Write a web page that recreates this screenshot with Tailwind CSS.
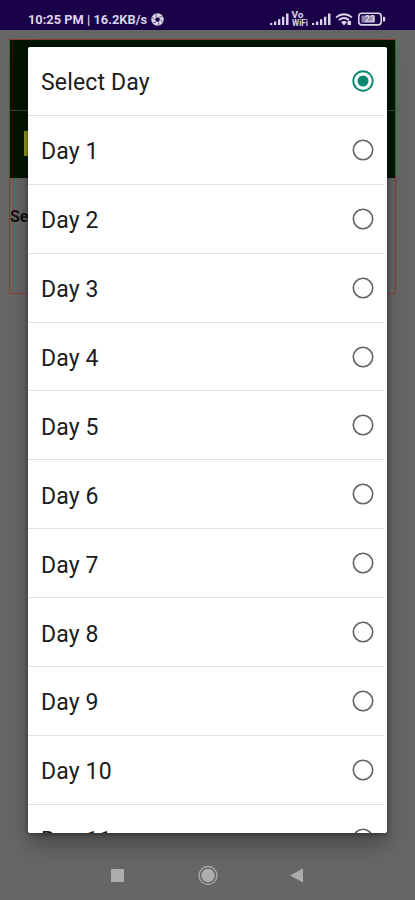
<!DOCTYPE html>
<html lang="en">
<head>
<meta charset="utf-8">
<title>Select Day</title>
<script src="https://cdn.jsdelivr.net/npm/@tailwindcss/browser@4"></script>
</head>
<body class="relative flex h-[900px] w-[415px] flex-col overflow-hidden bg-[#666666] font-['Roboto',sans-serif]">
<header class="flex h-[30px] shrink-0 items-start bg-[#1a0049] pr-[29px] pl-[28px] text-[#dcd6e8]">
  <div class="mt-[12px] flex h-[15px] items-center gap-[4px]">
    <span class="w-[119px] text-[12px] leading-[15px] font-bold whitespace-nowrap"><svg class="block h-[15px] w-[119px]" viewBox="0 0 119 15" fill="currentColor"><text x="0" y="12" textLength="119" lengthAdjust="spacingAndGlyphs">10:25 PM | 16.2KB/s</text></svg></span>
    <svg class="h-[13px] w-[13px]" viewBox="0 0 13 13"><circle cx="6.5" cy="6.5" r="6.2" fill="#dcd6e8"/><path d="M4.7 4 5.5.8M8.3 4l3.2-.5M9.8 6.7l1.8 2.5M8 9.4l-.7 2.7M4.8 9.4l-3 .3M3.2 6.7 1.2 4" fill="none" stroke="#1a0049" stroke-width=".6"/><circle cx="6.5" cy="6.6" r="2.3" fill="#1a0049"/></svg>
  </div>
  <svg class="mt-[10px] ml-auto h-[18px] w-[116px] shrink-0" viewBox="0 0 116 18" fill="#dcd6e8">
    <path d="M0 13h2.3v2H0zM4 11.5h2.3V15H4zM8 9.3h2.3V15H8zM12 6.7h2.3V15H12zM16 3.5h2.5V15H16z"/>
    <text x="21.5" y="7.5" font-size="8.5" font-weight="700" textLength="12" lengthAdjust="spacingAndGlyphs">Vo</text>
    <text x="22" y="16" font-size="8.5" font-weight="700" textLength="16" lengthAdjust="spacingAndGlyphs">WiFi</text>
    <path d="M42 13h2.3v2H42zM46 11.5h2.3V15H46zM50 9.3h2.3V15H50zM54 6.7h2.3V15H54zM58 3.5h2.5V15H58z"/>
    <g fill="none" stroke="#dcd6e8" stroke-width="1.8"><path d="M66 7.4q8-6.3 16 0M68.9 10q5.1-4 10.2 0"/></g>
    <path d="M71 12q3-2.2 6 0l-3 3.5zM77.5 11h3.5v4h-3.5z"/>
    <rect x="88.8" y="3.3" width="22.4" height="11.6" rx="3.2" fill="none" stroke="#dcd6e8" stroke-width="1.6"/>
    <rect x="91.5" y="5.5" width="13.5" height="7.2" rx="1" fill="#8d82a8"/>
    <path d="M113 6.8h1.2q1 0 1 1v2.8q0 1-1 1H113z"/>
    <text x="100" y="12.3" font-size="8.5" font-weight="700" text-anchor="middle">23</text>
  </svg>
</header>

<main class="mt-[9px] ml-[9px] flex h-[255px] w-[387px] shrink-0 flex-col border border-[#8e3c2c] bg-[#666666]">
  <div class="h-[70px] bg-[#001500]"></div>
  <div class="h-px bg-[#354335]"></div>
  <div class="flex h-[67px] items-center bg-[#001500] pl-[14px]"><span class="h-[25px] w-[60px] -translate-y-px bg-[#949a22]"></span></div>
  <div class="pt-[28px] text-[16px] leading-[22px] font-bold text-[#111]">Se</div>
</main>

<nav class="mt-auto flex h-[50px] shrink-0 items-center">
  <svg class="h-[50px] w-[415px]" viewBox="0 0 415 50" fill="#acacac"><path d="M111 19h13v13h-13zM303 18.5v14l-13-7z"/><circle cx="208" cy="25.5" r="9" fill="none" stroke="#acacac" stroke-width="1.3"/><circle cx="208" cy="25.5" r="6.8"/></svg>
</nav>

<section role="dialog" class="absolute top-[47px] left-[28px] h-[786px] w-[359px] overflow-hidden rounded-[2px] bg-white shadow-[0_12px_20px_rgba(0,0,0,0.28),0_1px_5px_rgba(0,0,0,0.4)]">
  <ul id="days" class="flex flex-col"></ul>
</section>

<script>
  const list = document.getElementById('days');
  for (let day = 0; day <= 11; day++) {
    const label = day ? 'Day ' + day : 'Select Day';
    const mark = day
      ? '<circle cx="11" cy="11" r="9.7" fill="none" stroke="#626262" stroke-width="1.6"/>'
      : '<circle cx="11" cy="11" r="9.7" fill="none" stroke="#0b8873" stroke-width="1.9"/><circle cx="11" cy="11" r="5.5" fill="#0b8873"/>';
    list.insertAdjacentHTML('beforeend',
      '<li class="mr-[3px] flex h-[68.9px] shrink-0 items-center border-b border-[#e0e0e0] pr-[10px] pl-[13px]">' +
      '<span class="grow pt-[5px] text-[23px] leading-[30px] tracking-[0.15px] text-[#1c1c1c]">' + label + '</span>' +
      '<svg class="h-[22px] w-[22px]" viewBox="0 0 22 22">' + mark + '</svg></li>');
  }
</script>
</body>
</html>
